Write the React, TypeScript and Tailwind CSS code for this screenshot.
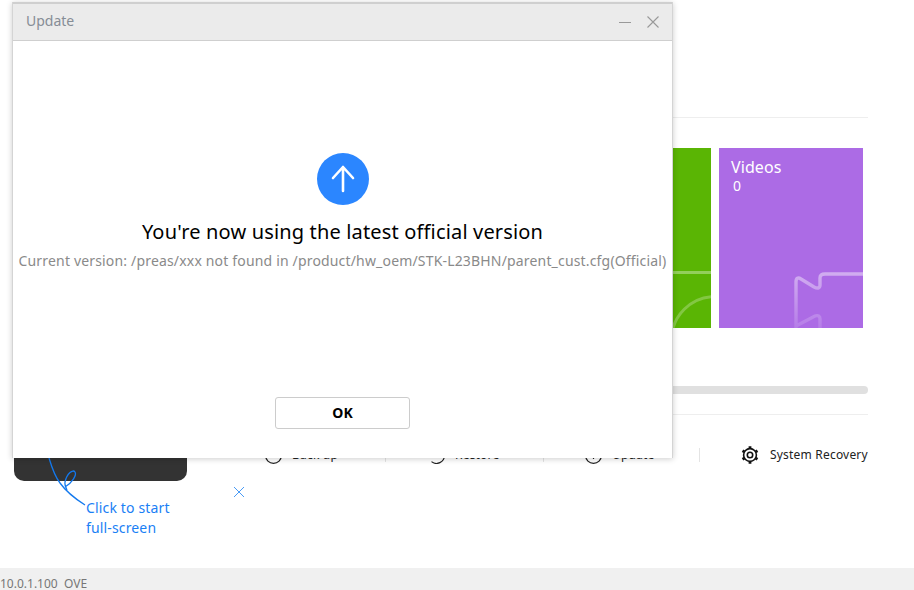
const font = { fontFamily: '"Noto Sans", "Open Sans", sans-serif' };

function Action({ label, icon, w, pl }: { label: string; icon: React.ReactNode; w: string; pl: string }) {
  return (
    <div className={`flex items-center gap-[10px] ${w} ${pl}`}>
      {icon}
      <span className="text-[12px] leading-none tracking-[0.2px] text-[#222] whitespace-nowrap">{label}</span>
      <span className="ml-auto h-[14px] w-px bg-[#e4e4e4]" />
    </div>
  );
}

const BackUpIcon = (
  <svg width="17" height="17" viewBox="0 0 17 17" fill="none" stroke="#222" strokeWidth="1.2" className="shrink-0">
    <circle cx="8.5" cy="8.5" r="7.9" />
    <path d="M8.5 4v6M6 6.5 8.5 4 11 6.5" />
  </svg>
);

const RestoreIcon = (
  <svg width="17" height="17" viewBox="0 0 17 17" fill="none" stroke="#222" strokeWidth="1.2" className="shrink-0">
    <path d="M3.5 14.6A7.9 7.9 0 0 0 16.4 8.5A7.9 7.9 0 0 0 .6 8.5" />
    <path d="M8.5 4v6M6 6.5 8.5 4 11 6.5" />
  </svg>
);

const UpdateIcon = (
  <svg width="17" height="17" viewBox="0 0 17 17" fill="none" stroke="#222" strokeWidth="1.2" className="shrink-0">
    <circle cx="8.5" cy="8.5" r="7.9" />
    <path d="M8.5 4v8M6 6.5 8.5 4 11 6.5" />
  </svg>
);

const Gear = (
  <svg width="18" height="18" viewBox="0 0 18 18" fill="none" stroke="#111" className="shrink-0">
    <circle cx="9" cy="9" r="2.7" strokeWidth="1.6" />
    <circle cx="9" cy="9" r="6.4" strokeWidth="1.6" />
    <path d="M9 .3v2.4M9 15.3v2.4M1.5 4.7l2 1.2M14.5 12.1l2 1.2M1.5 13.3l2-1.2M14.5 5.9l2-1.2" strokeWidth="2.8" />
  </svg>
);

export default function App() {
  return (
    <div className="relative flex h-[590px] w-[914px] flex-col overflow-hidden bg-white" style={font}>
      <main className="flex flex-1 pl-[14px]">
        <div className="relative w-[173px]">
          <div className="mt-[300px] h-[181px] rounded-b-[10px] bg-[#333333]" />
          <svg width="60" height="70" viewBox="0 0 60 70" fill="none" stroke="#1379ee" strokeWidth="1.3" className="absolute left-[34px] top-[456px]">
            <path d="M1 2C4 12 8 22 12 27C17 34 26 42 37 49" />
            <path d="M17 31C24 27 29 19 27 16C25 13 19 17 17 26C16.5 29 17.5 31 19 34" />
          </svg>
          <div className="absolute left-[72px] top-[498px] text-[14px] leading-[20px] tracking-[0.15px] text-[#1a80f5]">
            Click to start
            <br />
            full-screen
          </div>
          <svg width="12" height="12" viewBox="0 0 12 12" stroke="#4a9bf5" strokeWidth="1" className="absolute left-[219px] top-[486px]">
            <path d="M1 1l10 10M11 1L1 11" />
          </svg>
        </div>
        <div className="ml-[36px] w-[645px]">
          <div className="h-[118px] border-b border-[#eeeeee]" />
          <div className="mt-[30px] flex h-[180px] justify-end gap-2 pr-[5px]">
            <div className="relative w-[144px] overflow-hidden bg-[#5ab504]">
              <div className="absolute left-0 right-0 top-[123px] h-[3px] bg-white/35" />
              <div className="absolute left-[103px] top-[147px] h-[90px] w-[90px] rounded-full border-[3px] border-white/25" />
            </div>
            <div className="relative w-[144px] overflow-hidden bg-[#ac6be5] pl-3 pt-[8px] text-white">
              <div className="text-[16px] leading-[22px] tracking-[0.1px]">Videos</div>
              <div className="pl-[2px] text-[14px] leading-[16px]">0</div>
              <svg width="70" height="60" viewBox="0 0 70 60" fill="none" stroke="url(#videoFade)" strokeWidth="3.4" className="absolute left-[74px] top-[124px]">
                <defs>
                  <linearGradient id="videoFade" gradientUnits="userSpaceOnUse" x1="0" y1="0" x2="0" y2="56">
                    <stop offset="0" stopColor="#ffffff" stopOpacity="0.45" />
                    <stop offset="1" stopColor="#ffffff" stopOpacity="0.12" />
                  </linearGradient>
                </defs>
                <path d="M3 10C3 6 5 5 8 7L21 15C25 17 27 16 27 13V6C27 3 29 2 32 2H70" />
                <path d="M3 10V56M3 54L22 44C25 43 27 44 27 47V60" />
              </svg>
            </div>
          </div>
          <div className="mt-[58px] h-2 rounded-full bg-[#e0e0e0]" />
          <div className="mt-[20px] border-b border-[#eeeeee]" />
          <div className="mt-[31px] flex items-center">
            <Action label="Back up" icon={BackUpIcon} w="w-[163px]" pl="pl-[42px]" />
            <Action label="Restore" icon={RestoreIcon} w="w-[158px]" pl="pl-[42px]" />
            <Action label="Update" icon={UpdateIcon} w="w-[156px]" pl="pl-[41px]" />
            <div className="ml-[41px] flex items-center gap-[11px]">
              {Gear}
              <span className="whitespace-nowrap text-[12px] leading-none tracking-[0.2px] text-[#222]">System Recovery</span>
            </div>
          </div>
        </div>
      </main>
      <footer className="h-[22px] bg-[#f0f0f0] pt-[8px] text-[12px] leading-[16px] text-[#777]">10.0.1.100&nbsp; OVE</footer>

      <div className="absolute left-[12px] top-[2px] flex h-[456px] w-[661px] flex-col border-x border-[#d4d4d4] bg-white shadow-[0_1px_6px_rgba(0,0,0,0.2)]">
        <header className="flex h-[39px] items-center justify-between border-t-2 border-b border-[#cfcfcf] bg-[#ebebeb] pl-[13px] pr-[13px]">
          <span className="mb-[4px] text-[14px] text-[#868d96]">Update</span>
          <div className="flex items-center gap-4">
            <svg width="12" height="12" viewBox="0 0 12 12" stroke="#999" strokeWidth="1"><path d="M0 6.5h12" /></svg>
            <svg width="12" height="12" viewBox="0 0 12 12" stroke="#999" strokeWidth="1.1"><path d="M.5.5l11 11M11.5.5l-11 11" /></svg>
          </div>
        </header>
        <div className="flex flex-1 flex-col items-center">
          <div className="mt-[112px] flex h-[52px] w-[52px] items-center justify-center rounded-full bg-[#2b86ff]">
            <svg width="24" height="28" viewBox="0 0 24 28" fill="none" stroke="#fff" strokeWidth="2.6" strokeLinecap="round" strokeLinejoin="round">
              <path d="M12 26V2M2 13 12 2l10 11" />
            </svg>
          </div>
          <h1 className="mt-[11px] whitespace-nowrap text-[20px] leading-[32px] tracking-[0.16px] text-black">You're now using the latest official version</h1>
          <p className="mt-[2px] whitespace-nowrap text-[14px] leading-[22px] tracking-[0.17px] text-[#8a8a8a]">Current version: /preas/xxx not found in /product/hw_oem/STK-L23BHN/parent_cust.cfg(Official)</p>
          <button className="mt-auto mb-[29px] h-[32px] w-[135px] rounded-[3px] border border-[#cccccc] bg-white pb-[2px] text-[14px] font-bold text-black">OK</button>
        </div>
      </div>
    </div>
  );
}
